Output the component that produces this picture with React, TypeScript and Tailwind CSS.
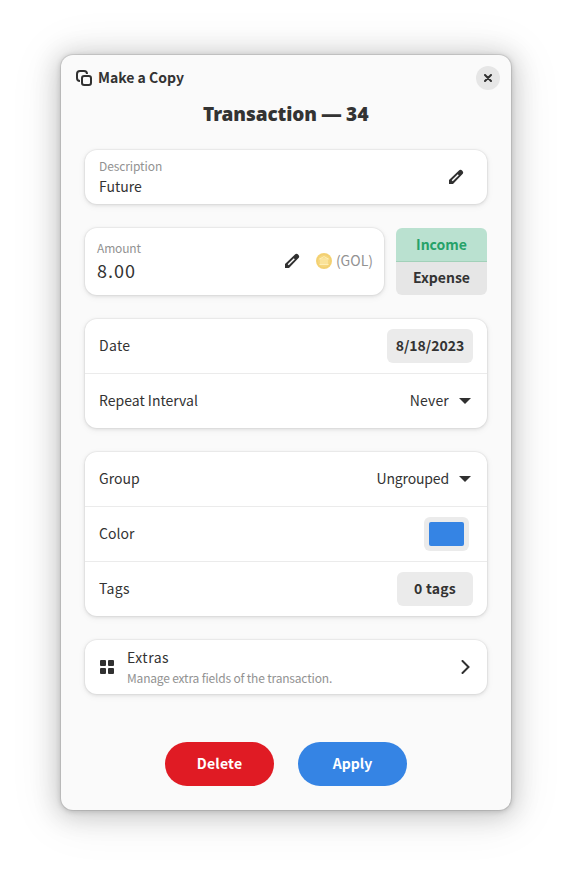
import type { ReactNode } from "react";

const cardClass =
  "rounded-xl bg-white shadow-[0_0_0_1px_rgba(0,0,0,0.03),0_1px_3px_1px_rgba(0,0,0,0.07),0_2px_6px_2px_rgba(0,0,0,0.03)]";

function Pencil() {
  return (
    <svg className="shrink-0" width="16" height="16" viewBox="0 0 16 16" fill="none">
      <path d="M1 15v-4L10.7 1.7a2.5 2.5 0 0 1 3.6 3.6L5 15z" fill="#303030" />
      <path d="M4.2 11.8L10.3 5.7" stroke="#fff" strokeWidth="1.5" />
    </svg>
  );
}

function Caret() {
  return (
    <svg width="12" height="6" viewBox="0 0 12 6">
      <path d="M0 0h12L6 6z" fill="#303030" />
    </svg>
  );
}

function Row({ label, children }: { label: ReactNode; children: ReactNode }) {
  return (
    <div className="box-content flex h-[54px] items-center justify-between">
      <div className="pb-0.5 pl-3.5">{label}</div>
      <div className="pr-3.5">{children}</div>
    </div>
  );
}

export default function App() {
  return (
    <div className="flex h-[877px] w-[572px] justify-center bg-white pt-[55px] font-['Noto_Sans_CJK_SC',sans-serif] text-[14px] leading-5 text-[#333333]">
      <main className="flex h-[755px] w-[450px] flex-col rounded-xl bg-[#fafafa] px-6 shadow-[0_0_0_1px_rgba(0,0,0,0.08),0_1px_5px_1px_rgba(0,0,0,0.15),0_3px_25px_5px_rgba(0,0,0,0.16),0_4px_50px_8px_rgba(0,0,0,0.07)]">
        <header className="-mx-2.5 flex h-[46px] items-center justify-between">
          <button className="flex items-center gap-1.5 pl-px font-bold">
            <svg width="16" height="16" viewBox="0 0 16 16" fill="none" stroke="#303030" strokeWidth="2">
              <rect x="6" y="6" width="9" height="9" rx="2.2" />
              <path d="M4 11C2 11 1 10 1 8V4c0-2 1-3 3-3h4c2 0 3 1 3 3" />
            </svg>
            <span className="pb-0.5">Make a Copy</span>
          </button>
          <button className="mr-[-3px] flex size-6 items-center justify-center rounded-full bg-[#e6e6e6]">
            <svg width="8" height="8" viewBox="0 0 8 8" stroke="#303030" strokeWidth="2" strokeLinecap="round">
              <path d="M1 1l6 6M7 1L1 7" />
            </svg>
          </button>
        </header>
        <h1 className="flex h-[49px] justify-center font-['Noto_Sans',sans-serif] text-[19px] leading-[26px] font-black">
          <span className="tracking-[-0.1px]">Transaction</span>
          <span className="mr-[5px] ml-[5px] origin-center scale-x-[1.1]">—</span>
          <span className="tracking-[0.4px]">34</span>
        </h1>

        <section className={`${cardClass} flex h-[54px] shrink-0 items-center justify-between pr-[23px] pl-3.5`}>
          <div>
            <div className="text-[12px] leading-[18px] tracking-[-0.1px] text-[#929292]">Description</div>
            <div className="leading-[22px]">Future</div>
          </div>
          <Pencil />
        </section>

        <div className="mt-6 flex h-[67px] shrink-0 gap-3">
          <section className={`${cardClass} flex w-[299px] items-center pr-[11px] pb-px pl-3`}>
            <div className="grow">
              <div className="text-[12px] leading-[18px] tracking-[-0.15px] text-[#929292]">Amount</div>
              <div className="text-[18px] leading-[26px] tracking-[1px]">8.00</div>
            </div>
            <Pencil />
            <svg className="ml-4 shrink-0" width="16" height="16" viewBox="0 0 16 16" fill="none">
              <circle cx="8" cy="8" r="8" fill="#f5d272" />
              <circle cx="8" cy="8" r="6.5" fill="#f6d77e" stroke="#edca70" strokeWidth=".5" />
              <path d="M3.5 6L8 3.6 12.5 6zM5 6.5v4.5M7 6.5v4.5M9 6.5v4.5M11 6.5v4.5M3.5 11.5h9" stroke="#fff0bb" strokeWidth=".9" />
            </svg>
            <span className="ml-1 pb-0.5 text-[#929292]">(GOL)</span>
          </section>
          <div className="flex w-[91px] flex-col overflow-hidden rounded-md text-center font-bold">
            <button className="h-[34px] border-b border-[#a2d1b9] bg-[#bae1d0] pb-px text-[#26a269]">Income</button>
            <button className="h-[33px] bg-[#e6e6e6] pb-[3px]">Expense</button>
          </div>
        </div>

        <section className={`${cardClass} mt-6 shrink-0 divide-y divide-[#ebebeb]`}>
          <Row label={<span className="tracking-[0.3px]">Date</span>}>
            <button className="block h-[34px] w-[86px] rounded-md bg-[#ebebeb] pb-0.5 font-bold">8/18/2023</button>
          </Row>
          <Row label="Repeat Interval">
            <span className="flex items-center gap-2.5 pr-0.5 tracking-[0.2px]"><span className="pb-0.5">Never</span><Caret /></span>
          </Row>
        </section>

        <section className={`${cardClass} mt-6 shrink-0 divide-y divide-[#ebebeb]`}>
          <Row label="Group">
            <span className="flex items-center gap-2.5 pr-0.5 tracking-[-0.15px]"><span className="pb-0.5">Ungrouped</span><Caret /></span>
          </Row>
          <Row label="Color">
            <button className="mr-1 block h-[34px] w-[45px] rounded-md bg-[#ebebeb] p-[5px]">
              <span className="block h-6 w-[35px] rounded-[2px] bg-[#3584e4]" />
            </button>
          </Row>
          <Row label={<span className="tracking-[0.3px]">Tags</span>}>
            <button className="block h-[34px] w-[76px] rounded-md bg-[#ebebeb] pb-0.5 font-bold tracking-[0.2px]">0 tags</button>
          </Row>
        </section>

        <section className={`${cardClass} mt-6 flex h-[54px] shrink-0 items-center pr-[17px] pl-[15px]`}>
          <svg width="14" height="14" viewBox="0 0 14 14" fill="#303030">
            <rect width="6" height="6" rx="1" /><rect x="8" width="6" height="6" rx="1" />
            <rect y="8" width="6" height="6" rx="1" /><rect x="8" y="8" width="6" height="6" rx="1" />
          </svg>
          <div className="ml-[13px] grow">
            <div className="-mt-px mb-px leading-[22px] tracking-[0.5px]">Extras</div>
            <div className="text-[12px] leading-[18px] tracking-[-0.18px] text-[#929292]">Manage extra fields of the transaction.</div>
          </div>
          <svg width="9" height="14" viewBox="0 0 9 14" fill="none" stroke="#303030" strokeWidth="2" strokeLinecap="round">
            <path d="M1.5 1L7.5 7l-6 6" />
          </svg>
        </section>

        <footer className="mt-12 flex justify-center gap-6 font-bold text-white">
          <button className="h-11 w-[109px] rounded-full bg-[#e01b24] pb-0.5 tracking-[0.2px]">Delete</button>
          <button className="h-11 w-[109px] rounded-full bg-[#3584e4] pb-0.5">Apply</button>
        </footer>
      </main>
    </div>
  );
}
